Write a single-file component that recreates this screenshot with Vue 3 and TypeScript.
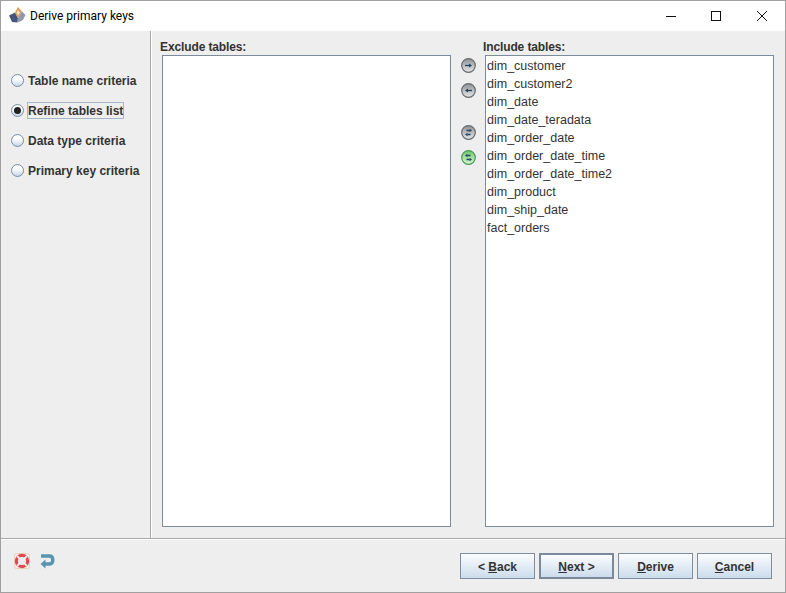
<script setup lang="ts">
const criteria = [
  { label: 'Table name criteria', selected: false },
  { label: 'Refine tables list', selected: true },
  { label: 'Data type criteria', selected: false },
  { label: 'Primary key criteria', selected: false },
]
const included = [
  'dim_customer', 'dim_customer2', 'dim_date', 'dim_date_teradata', 'dim_order_date',
  'dim_order_date_time', 'dim_order_date_time2', 'dim_product', 'dim_ship_date', 'fact_orders',
]
</script>

<template>
  <div class="window">
    <header class="titlebar">
      <svg class="app-icon" width="17" height="16" viewBox="0 0 17 16">
        <path d="M0 8.5 L6 5.5 L9 11 L8.5 15.5 L3 15 Z" fill="#47557a" />
        <path d="M9 0 L13 4.5 L9 11 L6 5.5 Z" fill="#dd9a55" />
        <path d="M13 4.5 L16.5 8 L14 13 L8.5 15.5 L9 11 Z" fill="#8f98ac" />
        <path d="M9 3 L11 5.5 L9 8.5 L7.6 5.5 Z" fill="#f6e8d2" />
      </svg>
      <span class="title">Derive primary keys</span>
      <div class="controls">
        <svg class="ctl" width="46" height="29" viewBox="0 0 46 29"><path d="M19 14.5 H29" stroke="#111" fill="none" /></svg>
        <svg class="ctl" width="46" height="29" viewBox="0 0 46 29"><rect x="18.5" y="9.5" width="9" height="9" stroke="#111" fill="none" /></svg>
        <svg class="ctl" width="46" height="29" viewBox="0 0 46 29"><path d="M18 9 L28 19 M28 9 L18 19" stroke="#111" fill="none" /></svg>
      </div>
    </header>

    <div class="main">
      <aside class="steps">
        <label v-for="c in criteria" :key="c.label" class="step">
          <span class="radio" :class="{ on: c.selected }"></span>
          <span class="step-label" :class="{ focus: c.selected }">{{ c.label }}</span>
        </label>
      </aside>

      <section class="content">
        <div class="col">
          <div class="col-title">Exclude tables:</div>
          <div class="list"></div>
        </div>

        <div class="arrows">
          <svg width="0" height="0" class="defs">
            <defs>
              <linearGradient id="grayBall" x1="0" y1="0" x2="0" y2="1">
                <stop offset="0" stop-color="#8f9296" />
                <stop offset="1" stop-color="#e6e7e8" />
              </linearGradient>
              <linearGradient id="greenBall" x1="0" y1="0" x2="0" y2="1">
                <stop offset="0" stop-color="#6cc96c" />
                <stop offset="1" stop-color="#d8f5d4" />
              </linearGradient>
            </defs>
          </svg>
          <svg class="arrow" width="17" height="17" viewBox="0 0 17 17">
            <circle cx="8.5" cy="8.5" r="6.8" fill="url(#grayBall)" stroke="#66686b" stroke-width="1.2" />
            <path d="M5 8.5 H9" class="shaft" /><path d="M9 6.5 L12 8.5 L9 10.5 Z" class="head" />
          </svg>
          <svg class="arrow gap1" width="17" height="17" viewBox="0 0 17 17">
            <circle cx="8.5" cy="8.5" r="6.8" fill="url(#grayBall)" stroke="#66686b" stroke-width="1.2" />
            <path d="M12 8.5 H8" class="shaft" /><path d="M8 6.5 L5 8.5 L8 10.5 Z" class="head" />
          </svg>
          <svg class="arrow gap2" width="17" height="17" viewBox="0 0 17 17">
            <circle cx="8.5" cy="8.5" r="6.8" fill="url(#grayBall)" stroke="#66686b" stroke-width="1.2" />
            <path d="M6.5 6.5 H9.5 M10.5 10.5 H7.5" class="shaft" /><path d="M9.5 4.7 L12 6.5 L9.5 8.3 Z M7.5 8.7 L5 10.5 L7.5 12.3 Z" class="head" />
          </svg>
          <svg class="arrow gap3" width="17" height="17" viewBox="0 0 17 17">
            <circle cx="8.5" cy="8.5" r="6.8" fill="url(#greenBall)" stroke="#4a9a52" stroke-width="1.2" />
            <path d="M10.5 6.5 H7.5 M6.5 10.5 H9.5" class="shaft" /><path d="M7.5 4.7 L5 6.5 L7.5 8.3 Z M9.5 8.7 L12 10.5 L9.5 12.3 Z" class="head" />
          </svg>
        </div>

        <div class="col">
          <div class="col-title">Include tables:</div>
          <div class="list">
            <div v-for="t in included" :key="t" class="item">{{ t }}</div>
          </div>
        </div>
      </section>
    </div>

    <footer class="footer">
      <div class="tools">
        <svg width="16" height="16" viewBox="0 0 16 16">
          <rect x="0.5" y="0.5" width="15" height="15" rx="2" fill="none" stroke="#e4d3b4" />
          <circle cx="8" cy="8" r="4" fill="#e9edf0" />
          <circle cx="8" cy="8" r="5.6" fill="none" stroke="#e2474d" stroke-width="3.2" />
          <path d="M3.2 3.2 L5.6 5.6 M12.8 3.2 L10.4 5.6 M3.2 12.8 L5.6 10.4 M12.8 12.8 L10.4 10.4" stroke="#eceff1" stroke-width="2" />
        </svg>
        <svg class="undo" width="15" height="16" viewBox="0 0 15 16">
          <path d="M1 3 H9.5 Q12.8 3 12.8 7 Q12.8 11 9.5 11 H5" fill="none" stroke="#5794ae" stroke-width="3.4" />
          <path d="M5.5 6.5 L0.5 11 L5.5 15.5 Z" fill="#5794ae" />
        </svg>
      </div>
      <div class="buttons">
        <button class="btn">&lt; <u>B</u>ack</button>
        <button class="btn default"><u>N</u>ext &gt;</button>
        <button class="btn"><u>D</u>erive</button>
        <button class="btn"><u>C</u>ancel</button>
      </div>
    </footer>
  </div>
</template>

<style>
html, body { margin: 0; padding: 0; }
</style>

<style scoped>
.window {
  box-sizing: border-box;
  width: 786px;
  height: 593px;
  border: 1px solid #a0a0a0;
  background: #eeeeee;
  display: flex;
  flex-direction: column;
  font-family: "Liberation Sans", Arial, sans-serif;
  font-size: 12px;
  color: #333333;
  overflow: hidden;
}
.titlebar {
  height: 30px;
  flex: none;
  background: #ffffff;
  display: flex;
  align-items: center;
  padding-left: 8px;
}
.app-icon { flex: none; margin-top: -2px; }
.title {
  margin-left: 4px;
  font-family: Roboto, "Noto Sans", sans-serif;
  font-size: 12px;
  color: #000000;
}
.controls { margin-left: auto; display: flex; }
.ctl { display: block; }
.main { flex: 1; display: flex; min-height: 0; }
.steps {
  flex: none;
  border-right: 1px solid #a9a9a9;
  box-shadow: 1px 0 0 #ffffff;
  padding-top: 34px;
  padding-left: 10px;
  width: 139px;
  display: flex;
  flex-direction: column;
}
.step { height: 30px; display: flex; align-items: center; font-weight: bold; }
.radio {
  box-sizing: border-box;
  width: 13px;
  height: 13px;
  border-radius: 50%;
  border: 1px solid #7b8da3;
  background: linear-gradient(#f6f9fc, #ffffff 35%, #c6d6e8);
  margin-right: 3px;
  position: relative;
  flex: none;
}
.radio.on::after {
  content: "";
  position: absolute;
  left: 2px;
  top: 2px;
  width: 7px;
  height: 7px;
  border-radius: 50%;
  background: #222222;
}
.step-label {
  padding: 1px 0 0;
  margin-top: 1px;
  border: 1px solid transparent;
  white-space: nowrap;
  line-height: 14px;
}
.step-label.focus { border-color: #a3b8cc; }
.content { flex: 1; display: flex; padding: 8px 11px 11px 11px; min-width: 0; }
.col { display: flex; flex-direction: column; width: 289px; flex: none; }
.col-title { font-weight: bold; height: 16px; line-height: 16px; margin-left: -2px; letter-spacing: -0.12px; }
.list {
  flex: 1;
  box-sizing: border-box;
  background: #ffffff;
  border: 1px solid #7c8c9c;
  padding-top: 1px;
  padding-left: 1px;
  font-size: 12.5px;
}
.item { height: 18px; line-height: 18px; }
.arrows { width: 34px; flex: none; display: flex; flex-direction: column; align-items: center; padding-top: 18px; }
.defs { position: absolute; }
.arrow { display: block; flex: none; }
.gap1 { margin-top: 8px; }
.gap2 { margin-top: 25px; }
.gap3 { margin-top: 8px; }
.shaft { fill: none; stroke: #24415f; stroke-width: 1.3; }
.head { fill: #24415f; }
.footer {
  height: 53px;
  flex: none;
  border-top: 1px solid #a9a9a9;
  box-shadow: inset 0 1px 0 #ffffff;
  display: flex;
  align-items: flex-start;
}
.tools { display: flex; gap: 10px; padding: 14px 0 0 13px; }
.buttons { margin-left: auto; display: flex; gap: 4px; padding: 14px 13px 0 0; }
.btn {
  box-sizing: border-box;
  width: 75px;
  height: 26px;
  padding: 2px 0 0;
  border: 1px solid #7b8ea3;
  background: linear-gradient(#fbfcfe, #ccdcec);
  font-family: "Liberation Sans", Arial, sans-serif;
  font-size: 12px;
  font-weight: bold;
  color: #333333;
}
.btn.default { border: 2px solid #7b8a9a; }
</style>
